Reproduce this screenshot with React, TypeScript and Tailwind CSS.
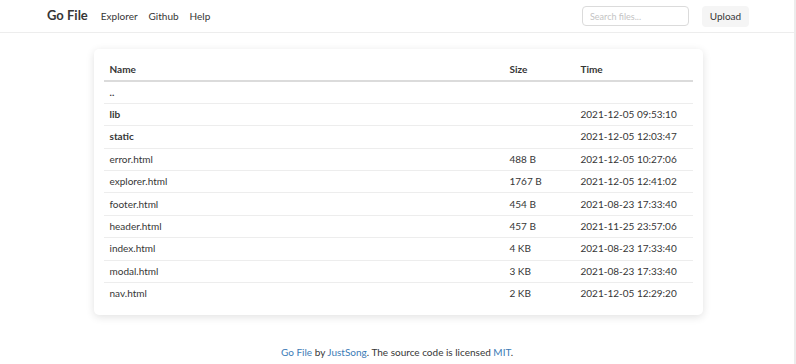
const files = [
  { name: '..', size: '', time: '', dir: true },
  { name: 'lib', size: '', time: '2021-12-05 09:53:10', dir: true },
  { name: 'static', size: '', time: '2021-12-05 12:03:47', dir: true },
  { name: 'error.html', size: '488 B', time: '2021-12-05 10:27:06' },
  { name: 'explorer.html', size: '1767 B', time: '2021-12-05 12:41:02' },
  { name: 'footer.html', size: '454 B', time: '2021-08-23 17:33:40' },
  { name: 'header.html', size: '457 B', time: '2021-11-25 23:57:06' },
  { name: 'index.html', size: '4 KB', time: '2021-08-23 17:33:40' },
  { name: 'modal.html', size: '3 KB', time: '2021-08-23 17:33:40' },
  { name: 'nav.html', size: '2 KB', time: '2021-12-05 12:29:20' },
];

export default function App() {
  return (
    <div className="flex min-h-[364px] w-[796px] bg-white text-[#363636] font-['Lato',sans-serif]">
      <div className="flex-1 flex flex-col">
        {/* Navbar */}
        <nav className="h-[33px] border-b border-[#ededed] flex items-center pl-[47px] pr-[45px]">
          <span className="text-[13px] font-bold mr-[13px]">Go File</span>
          <a className="text-[10px] mr-[11px]">Explorer</a>
          <a className="text-[10px] mr-[11px]">Github</a>
          <a className="text-[10px]">Help</a>
          <div className="ml-auto flex items-center gap-[13px]">
            <input
              placeholder="Search files..."
              className="w-[107px] h-[20px] border border-[#dbdbdb] rounded-[4px] px-[7px] text-[9px] placeholder:text-[#c4c4c4] outline-none"
            />
            <button className="h-[21px] w-[47px] bg-[#f5f5f5] rounded-[4px] text-[10px]">Upload</button>
          </div>
        </nav>

        {/* File list */}
        <div className="flex justify-center pt-[16px]">
          <div className="w-[609px] ml-[2px] rounded-[5px] bg-white shadow-[0_2px_8px_rgba(0,0,0,0.12)] pt-[10px] pb-[10px] px-[10px]">
            <table className="w-full text-[10px] border-collapse">
              <thead>
                <tr className="border-b-2 border-[#dbdbdb]">
                  <th className="text-left font-bold px-[6px] h-[22px] w-[400px]">Name</th>
                  <th className="text-left font-bold px-[6px] w-[71px]">Size</th>
                  <th className="text-left font-bold px-[6px]">Time</th>
                </tr>
              </thead>
              <tbody>
                {files.map((f, i) => (
                  <tr key={f.name} className={i < files.length - 1 ? 'border-b border-[#ededed]' : ''}>
                    <td className={'px-[6px] h-[22.4px] ' + (f.dir ? 'font-bold' : '')}>{f.name}</td>
                    <td className="px-[6px]">{f.size}</td>
                    <td className="px-[6px]">{f.time}</td>
                  </tr>
                ))}
              </tbody>
            </table>
          </div>
        </div>

        {/* Footer */}
        <footer className="mt-auto pb-[4px] text-center text-[10px]">
          <a className="text-[#3c7bb6]">Go File</a> by <a className="text-[#3c7bb6]">JustSong</a>. The source code is
          licensed <a className="text-[#3c7bb6]">MIT</a>.
        </footer>
      </div>
      <div className="w-[2px] bg-[#ececec]" />
    </div>
  );
}
